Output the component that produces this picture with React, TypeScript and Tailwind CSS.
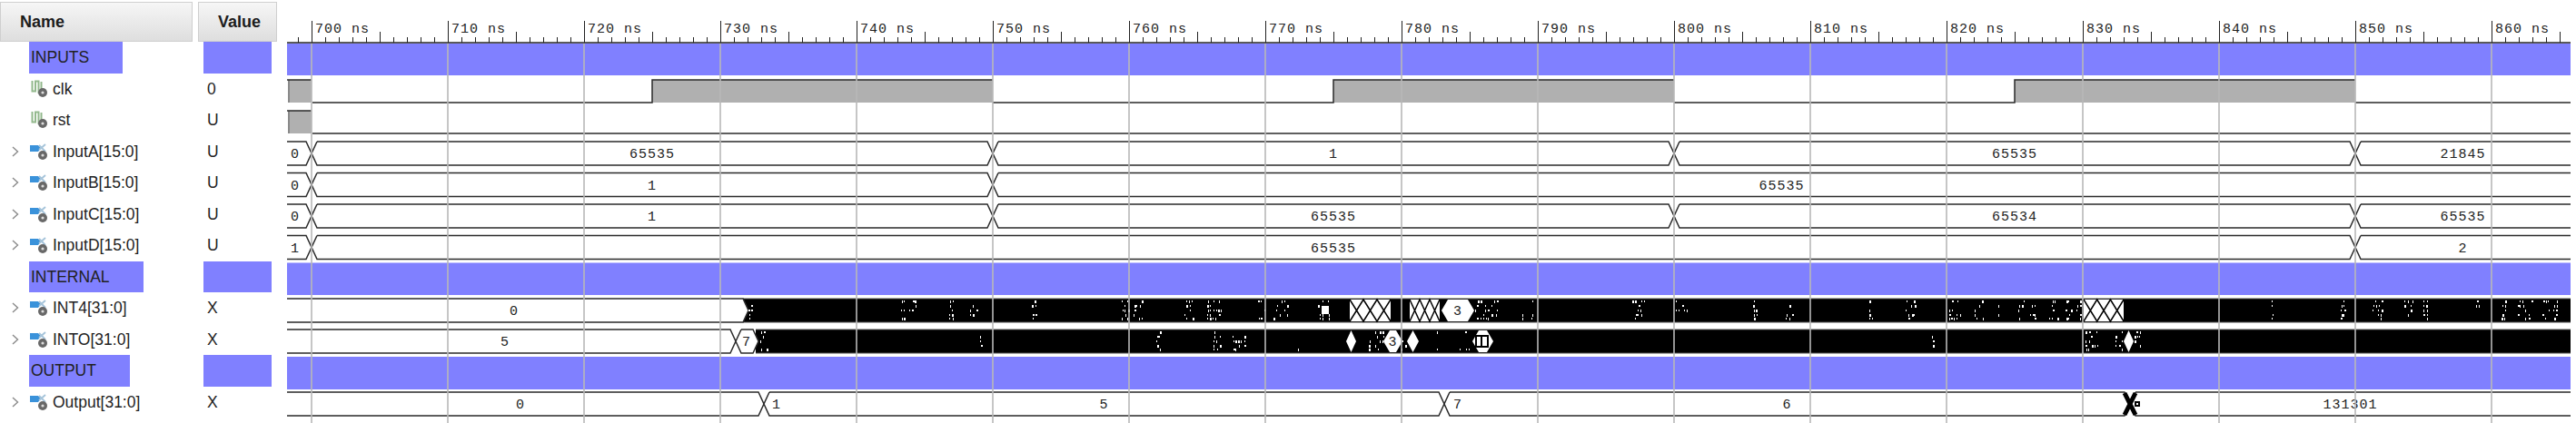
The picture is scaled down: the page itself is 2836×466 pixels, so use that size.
const ROW_H = 'h-[34.5px]';
const LEFT = 316;
const RIGHT = 2830;

type Row =
  | { kind: 'group'; name: string }
  | { kind: 'bit' | 'bus'; name: string; value: string };

const rows: Row[] = [
  { kind: 'group', name: 'INPUTS' },
  { kind: 'bit', name: 'clk', value: '0' },
  { kind: 'bit', name: 'rst', value: 'U' },
  { kind: 'bus', name: 'InputA[15:0]', value: 'U' },
  { kind: 'bus', name: 'InputB[15:0]', value: 'U' },
  { kind: 'bus', name: 'InputC[15:0]', value: 'U' },
  { kind: 'bus', name: 'InputD[15:0]', value: 'U' },
  { kind: 'group', name: 'INTERNAL' },
  { kind: 'bus', name: 'INT4[31:0]', value: 'X' },
  { kind: 'bus', name: 'INTO[31:0]', value: 'X' },
  { kind: 'group', name: 'OUTPUT' },
  { kind: 'bus', name: 'Output[31:0]', value: 'X' },
];

function BitIcon() {
  return (
    <svg width="20" height="20" viewBox="0 0 20 20" className="shrink-0">
      <path d="M2.5 1v11.5h3.5V1.5h3.5V14h3V2" fill="none" stroke="#93b98d" strokeWidth="2" />
      <circle cx="14" cy="14" r="5" fill="#686868" />
      <circle cx="14" cy="14" r="1.6" fill="#dcdcdc" />
    </svg>
  );
}

function BusIcon() {
  return (
    <svg width="20" height="20" viewBox="0 0 20 20" className="shrink-0">
      <path d="M0 3h9l3 3-3 4H0z" fill="#3a92da" />
      <path d="M10 3l7 7M17 2l-7 6" stroke="#a6c4da" strokeWidth="2" />
      <circle cx="14" cy="14" r="5" fill="#686868" />
      <circle cx="14" cy="14" r="1.6" fill="#dcdcdc" />
    </svg>
  );
}

function Chevron() {
  return (
    <svg width="8" height="12" viewBox="0 0 8 12" className="shrink-0">
      <path d="M1 1l5.5 5L1 11" fill="none" stroke="#8a8a8a" strokeWidth="1.4" />
    </svg>
  );
}

function Header({ label, className }: { label: string; className: string }) {
  return (
    <div className={`h-[44px] flex items-center border border-[#cfcfcf] bg-gradient-to-b from-[#f6f6f6] to-[#dedede] font-bold text-[18px] text-[#1c1c1c] ${className}`}>
      {label}
    </div>
  );
}

function NameCell({ row }: { row: Row }) {
  if (row.kind === 'group') {
    return (
      <div className={`${ROW_H} flex items-start pl-[32px]`}>
        <div className="h-[34.5px] bg-[#8080ff] pl-[2px] pr-[37px] flex items-center">{row.name}</div>
      </div>
    );
  }
  return (
    <div className={`${ROW_H} flex items-center pl-[13px]`}>
      <div className="w-[20px] shrink-0">{row.kind === 'bus' && <Chevron />}</div>
      {row.kind === 'bus' ? <BusIcon /> : <BitIcon />}
      <span className="ml-[5px]">{row.name}</span>
    </div>
  );
}

function ValueCell({ row }: { row: Row }) {
  if (row.kind === 'group') {
    return (
      <div className={ROW_H}>
        <div className="h-[34.5px] w-[75px] ml-[6px] bg-[#8080ff]" />
      </div>
    );
  }
  return <div className={`${ROW_H} flex items-center pl-[10px]`}>{row.value}</div>;
}

function Label({ x, y, children }: { x: number; y: number; children: React.ReactNode }) {
  return (
    <text x={x} y={y} textAnchor="middle" fontSize="15" letterSpacing="1" fill="#222" className="font-['Liberation_Mono',monospace]">
      {children}
    </text>
  );
}

// one bus value: hexagon between two transitions, flat at the pane edges
function Hex({ a, b, top }: { a: number; b: number; top: number }) {
  const bot = top + 26;
  const mid = top + 13;
  const sx = a <= LEFT ? a : a + 6;
  const ex = b >= RIGHT ? b : b - 6;
  const d =
    `M${sx},${top} H${ex}` +
    (b < RIGHT ? ` L${b},${mid} L${ex},${bot}` : ` M${ex},${bot}`) +
    ` H${sx}` +
    (a > LEFT ? ` L${a},${mid} L${sx},${top}` : '');
  return <path d={d} fill="white" stroke="#2a2a2a" strokeWidth="1.5" />;
}

function Bus({ top, edges, labels }: { top: number; edges: number[]; labels: string[] }) {
  const stops = [LEFT, ...edges, RIGHT];
  return (
    <g>
      {labels.map((label, i) => (
        <g key={i}>
          <Hex a={stops[i]} b={stops[i + 1]} top={top} />
          <Label x={i === 0 ? LEFT + 9 : (stops[i] + stops[i + 1]) / 2} y={top + 18}>{label}</Label>
        </g>
      ))}
    </g>
  );
}

function Clock({ high, low, edges }: { high: number; low: number; edges: number[] }) {
  // edges alternate rise, fall, ... after the unknown stretch that ends at 343
  const fills = [];
  const stops = [...edges, RIGHT];
  for (let i = 0; i + 1 < stops.length; i += 2) {
    fills.push(
      <rect key={i} x={stops[i]} y={high} width={stops[i + 1] - stops[i]} height={low - high} fill="#b0b0b0" />,
    );
  }
  let line = `M344,${low}`;
  edges.forEach((x, i) => {
    line += i % 2 === 0 ? ` L${x},${low} L${x},${high}` : ` L${x},${high} M${x},${low}`;
  });
  line += ` L${RIGHT},${low}`;
  return (
    <g>
      <rect x={LEFT + 1} y={high} width={343 - LEFT - 1} height={low - high} fill="#b0b0b0" />
      <rect x={LEFT + 1} y={high} width="2" height={low - high} fill="#8a8a8a" />
      <path d={`M${LEFT},${high} L343,${high}`} stroke="#2a2a2a" strokeWidth="1.5" />
      {fills}
      <path d={line} fill="none" stroke="#2a2a2a" strokeWidth="1.5" />
    </g>
  );
}

function Specks({ top, spans, seed }: { top: number; spans: number[][]; seed: number }) {
  let s = seed;
  const rand = () => {
    s = (s * 9301 + 49297) % 233280;
    return s / 233280;
  };
  const out: React.ReactNode[] = [];
  spans.forEach(([a, b]) => {
    const thin = b - a < 6;
    for (let x = a; x < b; x += 3) {
      [2, 7, 12, 17, 21].forEach((dy) => {
        if (rand() < (thin ? 0.6 : 0.42)) {
          out.push(
            <rect key={out.length} x={x + Math.floor(rand() * 2)} y={top + dy} width={rand() < 0.7 ? 1 : 2} height={2 + Math.floor(rand() * 2)} fill="white" />,
          );
        }
      });
    }
  });
  return <g shapeRendering="crispEdges">{out}</g>;
}

function Diamonds({ top, stops }: { top: number; stops: number[][] }) {
  const mid = top + 13;
  return (
    <g>
      {stops.map(([a, b]) => (
        <polygon key={a} points={`${a},${mid} ${(a + b) / 2},${top + 1} ${b},${mid} ${(a + b) / 2},${top + 25}`} fill="white" />
      ))}
    </g>
  );
}

// run of quick transitions: crossed lines on white
function Lattice({ top, a, b, step }: { top: number; a: number; b: number; step: number }) {
  let up = `M${a},${top + 1}`;
  let down = `M${a},${top + 25}`;
  let high = true;
  for (let x = a + step; x <= b + 0.1; x += step) {
    up += ` L${x},${high ? top + 25 : top + 1}`;
    down += ` L${x},${high ? top + 1 : top + 25}`;
    high = !high;
  }
  return (
    <g>
      <rect x={a} y={top + 1} width={b - a} height="24" fill="white" />
      <path d={`${up} ${down}`} fill="none" stroke="black" strokeWidth="1.5" />
    </g>
  );
}

function Plate({ top, a, b, label }: { top: number; a: number; b: number; label: string }) {
  const mid = top + 13;
  return (
    <g>
      <polygon points={`${a},${mid} ${a + 7},${top + 1} ${b - 7},${top + 1} ${b},${mid} ${b - 7},${top + 25} ${a + 7},${top + 25}`} fill="white" />
      <Label x={(a + b) / 2} y={top + 18}>{label}</Label>
    </g>
  );
}

function Noise({ top, x }: { top: number; x: number }) {
  return (
    <g>
      <rect x={x} y={top} width={RIGHT - x} height="26" fill="black" />
      <path d={`M${x},${top} H${RIGHT} M${x},${top + 26} H${RIGHT}`} stroke="#555" strokeWidth="1" />
    </g>
  );
}

const int4Spans = [
  [824, 830], [992, 1010], [1045, 1050], [1068, 1077], [1133, 1142], [1235, 1243], [1248, 1258],
  [1303, 1318], [1329, 1346], [1385, 1393], [1402, 1419], [1450, 1464],
  [1623, 1648], [1675, 1677], [1686, 1688], [1797, 1810], [1845, 1859], [1930, 1935], [1966, 1975],
  [2057, 2061], [2098, 2110], [2145, 2159], [2173, 2183], [2200, 2203], [2222, 2242], [2256, 2266],
  [2274, 2281], [2286, 2292], [2501, 2504], [2577, 2581], [2612, 2623], [2647, 2657], [2668, 2672],
  [2726, 2733], [2754, 2759], [2771, 2788], [2799, 2815],
];

const intoSpans = [
  [837, 847], [1079, 1081], [1273, 1278], [1336, 1343], [1357, 1372], [1428, 1434], [1507, 1523],
  [1543, 1549], [1582, 1584], [1607, 1618], [2127, 2129], [2296, 2311], [2329, 2338], [2349, 2357],
];

function Waves() {
  const grid = Array.from({ length: 17 }, (_, i) => 343 + i * 150);
  const ticks = Array.from({ length: 170 }, (_, i) => 328 + i * 15).filter((x) => x < RIGHT);
  return (
    <svg width={RIGHT - LEFT} height="466" viewBox={`${LEFT} 0 ${RIGHT - LEFT} 466`} className="shrink-0">
      {/* ruler */}
      <path d={`M${LEFT},47 H${RIGHT}`} stroke="#222" strokeWidth="1.5" />
      {ticks.map((x) => {
        const step = (x - 343) / 15;
        const h = step % 10 === 0 ? 24 : step % 5 === 0 ? 12 : 6;
        return <path key={x} d={`M${x + 0.5},${47 - h} V47`} stroke="#222" strokeWidth="1" />;
      })}
      {grid.map((x, i) => (
        <text key={x} x={x + 4} y="36" fontSize="15" letterSpacing="1" fill="#222" className="font-['Liberation_Mono',monospace]">
          {700 + i * 10} ns
        </text>
      ))}

      {/* group bands */}
      <rect x={LEFT} y="48" width={RIGHT - LEFT} height="35" fill="#8080ff" />
      <rect x={LEFT} y="289.5" width={RIGHT - LEFT} height="35.5" fill="#8080ff" />
      <rect x={LEFT} y="393" width={RIGHT - LEFT} height="36" fill="#8080ff" />

      <Clock high={88} low={113} edges={[718, 1093, 1468, 1843, 2218, 2593]} />
      <Clock high={122} low={147} edges={[]} />

      <Bus top={156} edges={[343, 1093, 1843, 2593]} labels={['0', '65535', '1', '65535', '21845']} />
      <Bus top={190.5} edges={[343, 1093]} labels={['0', '1', '65535']} />
      <Bus top={225} edges={[343, 1093, 1843, 2593]} labels={['0', '1', '65535', '65534', '65535']} />
      <Bus top={259.5} edges={[343, 2593]} labels={['1', '65535', '2']} />

      {/* INT4 */}
      <Noise top={329} x={818} />
      <Hex a={LEFT} b={824} top={329} />
      <Label x={566} y={347}>0</Label>
      <Specks top={329} spans={int4Spans} seed={17} />
      <Lattice top={329} a={1486} b={1531} step={15} />
      <Lattice top={329} a={1552} b={1585} step={11} />
      <Lattice top={329} a={2294} b={2338} step={14.7} />
      <rect x="1455" y="337" width="8" height="9" fill="white" />
      <Plate top={329} a={1587} b={1623} label="3" />

      {/* INTO */}
      <Noise top={363} x={832} />
      <Hex a={LEFT} b={810} top={363} />
      <Label x={556} y={381}>5</Label>
      <Hex a={810} b={835} top={363} />
      <Label x={822} y={381}>7</Label>
      <Specks top={363} spans={intoSpans} seed={5} />
      <Diamonds top={363} stops={[[1482, 1493], [1549, 1562], [2338, 2349]]} />
      <Plate top={363} a={1523} b={1544} label="3" />
      <Plate top={363} a={1621} b={1644} label="" />
      <rect x="1625" y="370" width="13" height="12" fill="none" stroke="black" strokeWidth="2" />
      <path d="M1631,370 V382" stroke="black" strokeWidth="2" />

      {/* Output */}
      <Bus top={432} edges={[841, 1590, 2345]} labels={['', '5', '6', '131301']} />
      <Label x={573} y={450}>0</Label>
      <Label x={855} y={450}>1</Label>
      <Label x={1605} y={450}>7</Label>
      <path d="M2339,433 L2351,457 M2351,433 L2339,457" stroke="black" strokeWidth="5" />
      <rect x="2350" y="442" width="6" height="6" fill="black" />
      <rect x="2352" y="444" width="2" height="2" fill="white" />

      {/* grid on top of everything */}
      {grid.map((x) => (
        <path key={x} d={`M${x},48 V466`} stroke="#b8b8b8" strokeWidth="1.6" />
      ))}
    </svg>
  );
}

export default function App() {
  return (
    <div className="w-[2836px] h-[466px] bg-white flex overflow-hidden font-['Liberation_Sans',sans-serif] text-[17.5px] text-[#222]">
      <div className="w-[212px] shrink-0 pt-[2px]">
        <Header label="Name" className="pl-[21px]" />
        {rows.map((row) => <NameCell key={row.name} row={row} />)}
      </div>
      <div className="w-[87px] ml-[6px] mr-[11px] shrink-0 pt-[2px]">
        <Header label="Value" className="pl-[21px]" />
        {rows.map((row) => <ValueCell key={row.name} row={row} />)}
      </div>
      <Waves />
    </div>
  );
}
